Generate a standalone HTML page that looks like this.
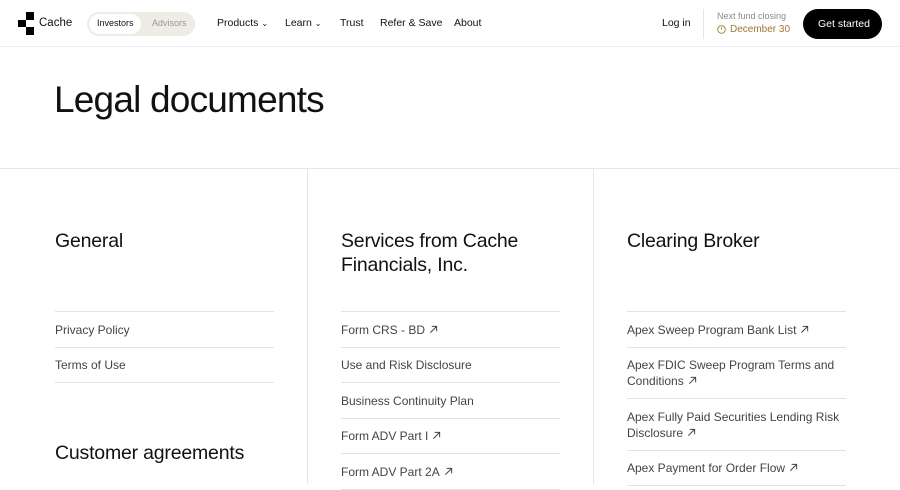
<!DOCTYPE html>
<html><head><meta charset="utf-8"><style>
*{margin:0;padding:0;box-sizing:border-box}
body{width:900px;height:484px;overflow:hidden;background:#fff;font-family:"Liberation Sans",Arial,sans-serif;color:#111;position:relative}
.nav{position:absolute;top:0;left:0;width:900px;height:47px;border-bottom:1px solid #ececec}
.a{position:absolute;font-size:10.5px;color:#111;white-space:nowrap}
.sq{position:absolute;background:#000}
.h1{position:absolute;left:54px;top:79px;font-size:37px;letter-spacing:-0.8px;color:#111}
.hl{position:absolute;left:0;top:168px;width:900px;height:1px;background:#e6e6e6}
.vl{position:absolute;top:168px;width:1px;height:316px;background:#e6e6e6}
.col{position:absolute;top:229px;width:219px}
.col h2{font-size:19.5px;font-weight:normal;line-height:24px;letter-spacing:-0.2px;color:#111;height:82px}
.row{border-top:1px solid #e2e2e2;padding:9.5px 0 9px;font-size:12px;line-height:16px;color:#444}
.row:last-child{border-bottom:1px solid #e2e2e2}
.ar{display:inline-block;width:9px;height:9px;margin-left:4px;vertical-align:0}
</style></head><body>
<div class="nav">
 <div class="sq" style="left:26px;top:12px;width:8px;height:8px"></div>
 <div class="sq" style="left:18px;top:20px;width:8px;height:7px"></div>
 <div class="sq" style="left:26px;top:27px;width:8px;height:8px"></div>
 <div class="a" style="left:39px;top:17px;font-size:11.5px">Cache</div>
 <div style="position:absolute;left:87px;top:12px;width:108px;height:24px;border-radius:12px;background:#efece6"></div>
 <div style="position:absolute;left:89px;top:14px;width:52px;height:20px;border-radius:10px;background:#fff"></div>
 <div class="a" style="left:97px;top:18px;font-size:9px">Investors</div>
 <div class="a" style="left:152px;top:18px;font-size:9px;color:#9a978f">Advisors</div>
 <div class="a" style="left:217px;top:17px">Products <span style="font-size:8px">&#8964;</span></div>
 <div class="a" style="left:285px;top:17px">Learn <span style="font-size:8px">&#8964;</span></div>
 <div class="a" style="left:340px;top:17px">Trust</div>
 <div class="a" style="left:380px;top:17px">Refer &amp; Save</div>
 <div class="a" style="left:454px;top:17px">About</div>
 <div class="a" style="left:662px;top:17px">Log in</div>
 <div style="position:absolute;left:703px;top:9px;width:1px;height:30px;background:#e6e6e6"></div>
 <div class="a" style="left:717px;top:11px;font-size:9px;color:#8a8a8a">Next fund closing</div>
 <svg style="position:absolute;left:717px;top:25px" width="9" height="9" viewBox="0 0 10 10"><circle cx="5" cy="5" r="4.2" fill="none" stroke="#9a7a2e" stroke-width="1"/><path d="M5 2.8V5.2" stroke="#9a7a2e" stroke-width="1"/></svg>
 <div class="a" style="left:730px;top:24px;font-size:10px;color:#9a7a2e">December 30</div>
 <div style="position:absolute;left:803px;top:9px;width:79px;height:30px;border-radius:15px;background:#000"></div>
 <div class="a" style="left:818px;top:18px;color:#fff">Get started</div>
</div>
<div class="h1">Legal documents</div>
<div class="hl"></div>
<div class="vl" style="left:307px"></div>
<div class="vl" style="left:593px"></div>
<svg width="0" height="0" style="position:absolute"><defs><symbol id="arr" viewBox="0 0 10 10"><path d="M1.5 8.5L8.5 1.5M3 1.5H8.5V7" fill="none" stroke="#444" stroke-width="1.1"/></symbol></defs></svg>
<div class="col" style="left:55px">
 <h2>General</h2>
 <div class="row">Privacy Policy</div>
 <div class="row">Terms of Use</div>
</div>
<div class="a" style="left:55px;top:442px;font-size:19.5px;letter-spacing:-0.2px">Customer agreements</div>
<div class="col" style="left:341px">
 <h2>Services from Cache Financials, Inc.</h2>
 <div class="row">Form CRS - BD<svg class="ar"><use href="#arr"/></svg></div>
 <div class="row">Use and Risk Disclosure</div>
 <div class="row">Business Continuity Plan</div>
 <div class="row">Form ADV Part I<svg class="ar"><use href="#arr"/></svg></div>
 <div class="row">Form ADV Part 2A<svg class="ar"><use href="#arr"/></svg></div>
</div>
<div class="col" style="left:627px">
 <h2>Clearing Broker</h2>
 <div class="row">Apex Sweep Program Bank List<svg class="ar"><use href="#arr"/></svg></div>
 <div class="row">Apex FDIC Sweep Program Terms and Conditions<svg class="ar"><use href="#arr"/></svg></div>
 <div class="row">Apex Fully Paid Securities Lending Risk Disclosure<svg class="ar"><use href="#arr"/></svg></div>
 <div class="row">Apex Payment for Order Flow<svg class="ar"><use href="#arr"/></svg></div>
</div>
</body></html>
